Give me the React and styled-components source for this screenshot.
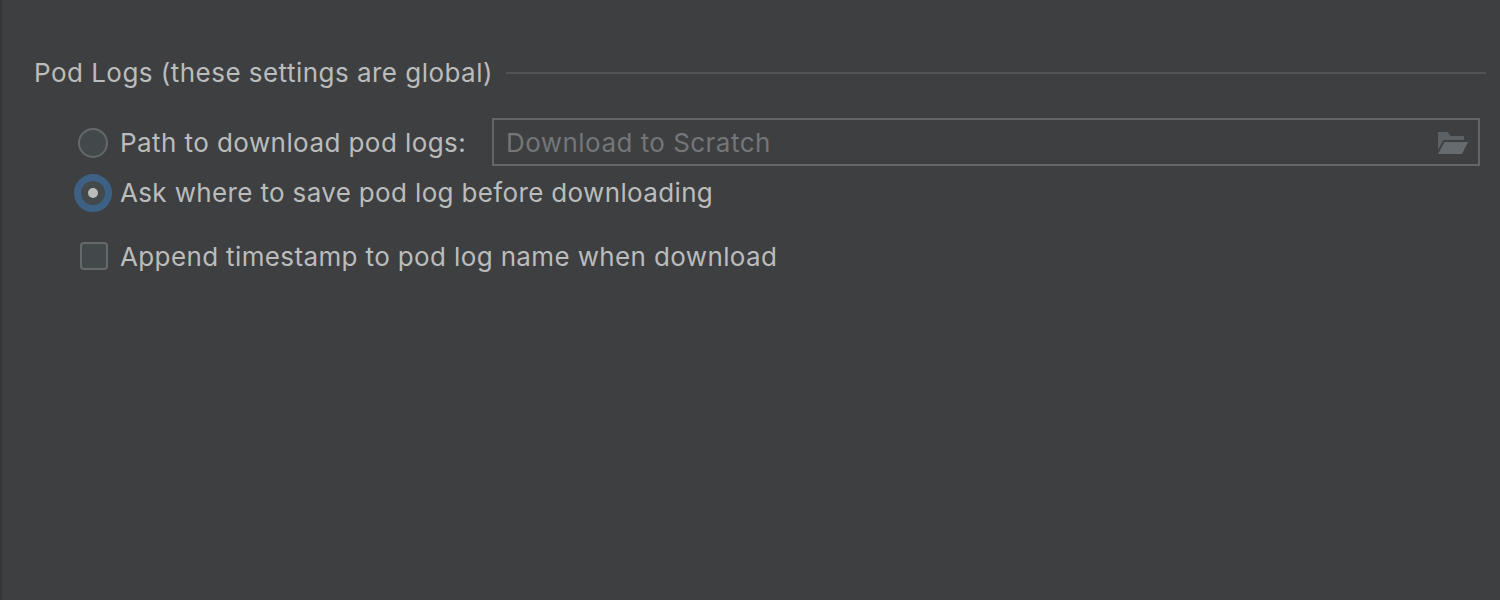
import React from 'react';
import styled, { createGlobalStyle } from 'styled-components';

const GlobalStyle = createGlobalStyle`
  * { box-sizing: border-box; }
  body { margin: 0; background: #3e3f41; }
`;

const Panel = styled.main`
  width: 1500px;
  height: 600px;
  padding: 56px 14px 0 32px;
  border-left: 2px solid #353638;
  background: #3e3f41;
  color: #bbbcbc;
  font: 400 26px/34px Inter, sans-serif;
  overflow: hidden;
`;

const Heading = styled.header`
  display: flex;
  align-items: center;
  height: 34px;
`;

const Label = styled.span`
  white-space: nowrap;
  letter-spacing: ${({ $spacing }) => $spacing || 0}px;
`;

const Rule = styled.i`
  flex: 1;
  height: 2px;
  margin-left: 13px;
  background: #515355;
`;

const Options = styled.div`
  padding: 28px 6px 0 40px;
`;

const Row = styled.div`
  display: flex;
  align-items: center;
  height: ${({ $height }) => $height}px;
  margin-top: ${({ $gap }) => $gap || 0}px;
`;

const Control = styled.span`
  display: flex;
  flex-shrink: 0;
  align-items: center;
  justify-content: center;
  width: 38px;
  height: 38px;
  margin-right: 8px;
`;

const Radio = styled.span`
  display: flex;
  align-items: center;
  justify-content: center;
  width: ${({ $selected }) => ($selected ? 38 : 30)}px;
  height: ${({ $selected }) => ($selected ? 38 : 30)}px;
  border: ${({ $selected }) => ($selected ? '7px solid #3d6185' : '2px solid #646869')};
  border-radius: 50%;
  background: #43494a;
`;

const Dot = styled.span`
  width: 10px;
  height: 10px;
  border-radius: 50%;
  background: #bbbcbc;
`;

const Checkbox = styled.span`
  width: 28px;
  height: 28px;
  margin: 0 0 2px 2px;
  border: 2px solid #646869;
  border-radius: 4px;
  background: #43494a;
`;

const PathOption = styled.div`
  display: flex;
  align-items: center;
  width: 418px;
  padding-top: 2px;
`;

const PathField = styled.div`
  display: flex;
  align-items: center;
  justify-content: space-between;
  flex: 1;
  height: 48px;
  padding: 2px 10px 0 12px;
  border: 2px solid #646566;
  color: #747678;
`;

const FolderIcon = styled.svg`
  display: block;
  width: 30px;
  height: 22px;
`;

export default function App() {
  return (
    <>
      <GlobalStyle />
      <Panel>
        <Heading>
          <Label $spacing={0.47}>Pod Logs (these settings are global)</Label>
          <Rule />
        </Heading>
        <Options>
          <Row $height={48}>
            <PathOption>
              <Control><Radio /></Control>
              <Label $spacing={0.43}>Path to download pod logs:</Label>
            </PathOption>
            <PathField>
              <Label $spacing={0.46}>Download to Scratch</Label>
              <FolderIcon viewBox="0 0 30 22">
                <path d="M0 0h9.5l3 4H26v4H5.5L0 18z" fill="#5b6165" />
                <path d="M6.5 10H30l-6 12H0z" fill="#656b6f" />
              </FolderIcon>
            </PathField>
          </Row>
          <Row $height={38} $gap={8}>
            <Control><Radio $selected><Dot /></Radio></Control>
            <Label $spacing={0.35}>Ask where to save pod log before downloading</Label>
          </Row>
          <Row $height={38} $gap={26}>
            <Control><Checkbox /></Control>
            <Label $spacing={0.37}>Append timestamp to pod log name when download</Label>
          </Row>
        </Options>
      </Panel>
    </>
  );
}
